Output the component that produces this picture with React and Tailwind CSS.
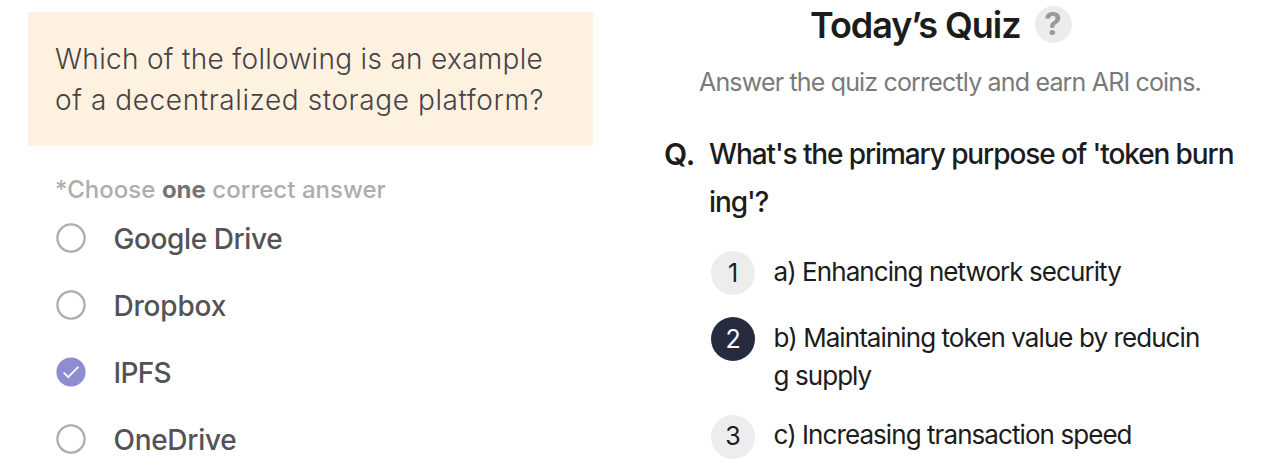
const answers = [
  { label: "Google Drive", tracking: "tracking-[-0.4px]" },
  { label: "Dropbox", tracking: "tracking-[-0.2px]" },
  { label: "IPFS", tracking: "tracking-[-0.7px]", checked: true },
  { label: "OneDrive", tracking: "tracking-[-0.3px]" },
]

const options = [
  { num: 1, lines: ["a) Enhancing network security"] },
  { num: 2, lines: ["b) Maintaining token value by reducin", "g supply"], active: true },
  { num: 3, lines: ["c) Increasing transaction speed"] },
]

const Radio = ({ checked }) => (
  <svg viewBox="0 0 30 30" className="h-[30px] w-[30px] shrink-0">
    {checked ? (
      <>
        <circle cx="15" cy="15" r="14.6" fill="#8f8dd0" />
        <path d="M7.6 15.6l4.6 4.5 10.2-10.3" fill="none" stroke="#fff" strokeWidth="1.8" />
      </>
    ) : (
      <circle cx="15" cy="15" r="13.6" fill="#fff" stroke="#adadad" strokeWidth="2.3" />
    )}
  </svg>
)

const StorageQuestion = () => (
  <section className="w-[593px] shrink-0 pt-3 pl-7 font-['Inter',sans-serif]">
    <div className="h-[134px] bg-[#fff1df] pt-[27px] pl-[27px] text-[28px] leading-[41px] font-light whitespace-nowrap text-[#464246]">
      <p className="tracking-[0.31px]">Which of the following is an example</p>
      <p className="tracking-[0.59px]">of a decentralized storage platform?</p>
    </div>
    <p className="mt-7 pl-[27px] text-[24px] leading-8 font-medium tracking-[0.03px] whitespace-nowrap text-[#adadad]">
      *Choose <span className="font-bold text-[#747474]">one</span> correct answer
    </p>
    <ul className="-mt-px pl-[27.5px]">
      {answers.map((a) => (
        <li key={a.label} className="flex h-[67px] items-start gap-7">
          <div className="pt-[18px]">
            <Radio checked={a.checked} />
          </div>
          <span className={`pt-[18px] text-[28px] leading-8 font-medium whitespace-nowrap text-[#535357] ${a.tracking}`}>
            {a.label}
          </span>
        </li>
      ))}
    </ul>
  </section>
)

const TodaysQuiz = () => (
  <section className="w-[687px] pl-[71px] font-['Inter',sans-serif] text-[#1c1c1c]">
    <header className="flex h-[49px] items-center pl-[146px]">
      <h1 className="text-[36px] font-semibold tracking-[-1.05px] whitespace-nowrap">Today’s Quiz</h1>
      <span className="ml-[14px] flex h-[37px] w-[37px] items-center justify-center rounded-full bg-[#ececec] text-[31px] font-bold text-[#999]">
        ?
      </span>
    </header>
    <p className="mt-[17px] pl-[35px] text-[25px] leading-8 tracking-[-0.83px] whitespace-nowrap text-[#7a7a7a]">
      Answer the quiz correctly and earn ARI coins.
    </p>
    <div className="mt-8 flex text-[28px] leading-[48px]">
      <span className="w-[45px] text-[30px] font-semibold">Q.</span>
      <p className="font-medium tracking-[-1.1px] whitespace-nowrap">
        What's the primary purpose of 'token burn
        <br />
        ing'?
      </p>
    </div>
    <ol className="mt-[25px] flex flex-col gap-[19px] pl-[47px]">
      {options.map((o) => (
        <li key={o.num} className="flex min-h-[47px] items-start gap-[18.5px]">
          <span
            className={`flex h-11 w-11 shrink-0 items-center justify-center rounded-full pt-px text-[25px] ${
              o.active ? "bg-[#272b40] text-white" : "bg-[#ededed]"
            }`}
          >
            {o.num}
          </span>
          <p className="pt-[1.5px] text-[26px] leading-[38.5px] tracking-[-0.93px] whitespace-nowrap">
            {o.lines.map((line) => (
              <span key={line} className="block">
                {line}
              </span>
            ))}
          </p>
        </li>
      ))}
    </ol>
  </section>
)

export default function App() {
  return (
    <main className="flex h-[471px] w-[1280px] overflow-hidden bg-white">
      <StorageQuestion />
      <TodaysQuiz />
    </main>
  )
}
